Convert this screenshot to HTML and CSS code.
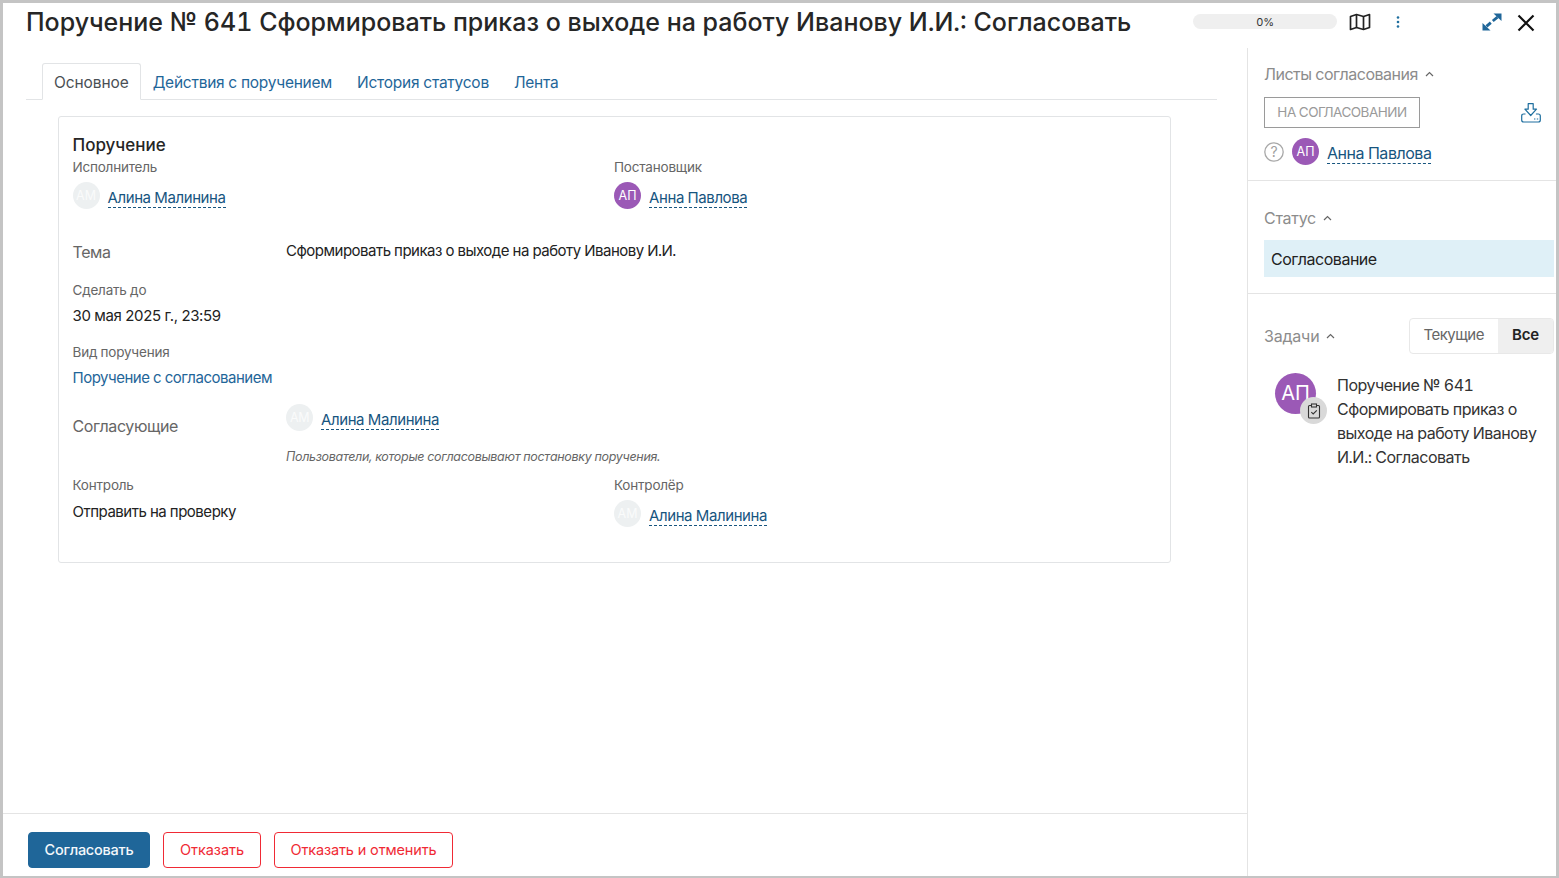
FILE: index.html
```html
<!DOCTYPE html>
<html lang="ru">
<head>
<meta charset="utf-8">
<title>Поручение № 641</title>
<link rel="stylesheet" href="styles.css">
</head>
<body>
<div class="modal">
  <header class="head">
    <h1 class="title">Поручение № 641 Сформировать приказ о выходе на работу Иванову И.И.: Согласовать</h1>
    <div class="progress">0%</div>
    <svg class="ico-map" width="22" height="18" viewBox="0 0 22 18" fill="none" stroke="#222" stroke-width="1.7" stroke-linejoin="round"><path d="M1.5 3.5 7.5 1.5 14.5 3.5 20.5 1.5V14.5L14.5 16.5 7.5 14.5 1.5 16.5Z"/><path d="M7.5 1.5V14.5M14.5 3.5V16.5"/></svg>
    <svg class="ico-dots" width="4" height="12" viewBox="0 0 4 12" fill="#1f6f9f"><circle cx="2" cy="1.5" r="1.3"/><circle cx="2" cy="6" r="1.3"/><circle cx="2" cy="10.5" r="1.3"/></svg>
    <svg class="ico-expand" width="20" height="18" viewBox="0 0 20 18" fill="#1f6699"><path d="M11.5 .5H19.5V8Z"/><path d="M.5 17.5V10L8.5 17.5Z"/><path d="M4.5 13.4 8.8 9.6M10.8 8 15.5 4.2" stroke="#1f6699" stroke-width="2.8"/></svg>
    <svg class="ico-close" width="18" height="18" viewBox="0 0 18 18" fill="none" stroke="#111" stroke-width="2.2"><path d="M1.5 1.5 16.5 16.5M16.5 1.5 1.5 16.5"/></svg>
  </header>
  <div class="body">
    <main class="main">
      <div class="content">
        <nav class="tabs">
          <span class="tab active">Основное</span>
          <a class="tab">Действия с поручением</a>
          <a class="tab">История статусов</a>
          <a class="tab">Лента</a>
        </nav>
        <section class="card">
          <h2 class="card-title">Поручение</h2>
          <div class="cols first">
            <div class="col">
              <div class="label">Исполнитель</div>
              <div class="user"><span class="ava pale">АМ</span><a class="ulink">Алина Малинина</a></div>
            </div>
            <div class="col">
              <div class="label">Постановщик</div>
              <div class="user"><span class="ava">АП</span><a class="ulink">Анна Павлова</a></div>
            </div>
          </div>
          <div class="row topic">
            <div class="row-label">Тема</div>
            <div class="row-val">Сформировать приказ о выходе на работу Иванову И.И.</div>
          </div>
          <div class="field due">
            <div class="label">Сделать до</div>
            <div class="value">30 мая 2025 г., 23:59</div>
          </div>
          <div class="field kind">
            <div class="label">Вид поручения</div>
            <a class="value link">Поручение с согласованием</a>
          </div>
          <div class="row approvers">
            <div class="row-label">Согласующие</div>
            <div class="row-val">
              <div class="user"><span class="ava pale">АМ</span><a class="ulink">Алина Малинина</a></div>
              <div class="hint">Пользователи, которые согласовывают постановку поручения.</div>
            </div>
          </div>
          <div class="cols control">
            <div class="col">
              <div class="label">Контроль</div>
              <div class="value ctl">Отправить на проверку</div>
            </div>
            <div class="col">
              <div class="label">Контролёр</div>
              <div class="user"><span class="ava pale">АМ</span><a class="ulink">Алина Малинина</a></div>
            </div>
          </div>
        </section>
      </div>
      <footer class="foot">
        <button class="btn primary">Согласовать</button>
        <button class="btn danger refuse">Отказать</button>
        <button class="btn danger cancel">Отказать и отменить</button>
      </footer>
    </main>
    <aside class="side">
      <section class="sec sec-lists">
        <div class="sec-title">Листы согласования <svg class="chev" width="9" height="6" viewBox="0 0 9 6" fill="none" stroke="#666" stroke-width="1.2"><path d="M1 5 4.5 1.5 8 5"/></svg></div>
        <div class="status-row">
          <span class="tag">НА СОГЛАСОВАНИИ</span>
          <svg class="ico-dl" width="20" height="20" viewBox="0 0 20 20" fill="none" stroke="#1f6f9f" stroke-width="1.2" stroke-linejoin="round"><path d="M7.2 .7H12.2V6.2H15.5L9.7 12.5 3.9 6.2H7.2Z"/><path d="M4.5 11H2.7Q.7 11 .7 13V17Q.7 19 2.7 19H17.3Q19.3 19 19.3 17V13Q19.3 11 17.3 11H14.9"/><path d="M13 16H14.4M15.8 16H17.2"/></svg>
        </div>
        <div class="approver">
          <svg class="ico-q" width="20" height="20" viewBox="0 0 20 20" fill="none"><circle cx="10" cy="10" r="9.2" stroke="#a8a8a8" stroke-width="1.3"/><text class="q" x="10" y="15" text-anchor="middle">?</text></svg>
          <span class="ava">АП</span><a class="ulink side-link">Анна Павлова</a>
        </div>
      </section>
      <section class="sec sec-status">
        <div class="sec-title">Статус <svg class="chev" width="9" height="6" viewBox="0 0 9 6" fill="none" stroke="#666" stroke-width="1.2"><path d="M1 5 4.5 1.5 8 5"/></svg></div>
        <div class="status-bar">Согласование</div>
      </section>
      <section class="sec-tasks">
        <div class="tasks-head">
          <div class="sec-title">Задачи <svg class="chev" width="9" height="6" viewBox="0 0 9 6" fill="none" stroke="#666" stroke-width="1.2"><path d="M1 5 4.5 1.5 8 5"/></svg></div>
          <div class="seg"><span class="seg-item">Текущие</span><span class="seg-item on">Все</span></div>
        </div>
        <div class="task">
          <div class="task-ava">
            <span class="ava big">АП</span>
            <span class="badge"><svg width="14" height="16" viewBox="0 0 14 16" fill="none" stroke="#333" stroke-width="1.1"><rect x="1.5" y="2.5" width="11" height="12.5" rx="1"/><rect x="4.5" y="1" width="5" height="3" fill="#d9d9d9"/><path d="M4.3 9.2 6.2 11 9.8 7.4"/></svg></span>
          </div>
          <div class="task-text">Поручение № 641 Сформировать приказ о выходе на работу Иванову И.И.: Согласовать</div>
        </div>
      </section>
    </aside>
  </div>
</div>
</body>
</html>
```

FILE: styles.css
```css
* { box-sizing: border-box; }
html, body { margin: 0; height: 100%; }
body { font-family: Inter, "Noto Sans", sans-serif; color: #222; background: #fff; overflow: hidden; font-variant-numeric: tabular-nums; }
a { color: inherit; }

.modal { width: 1559px; height: 878px; border: 3px solid #c4c4c4; border-bottom-width: 2px; display: flex; flex-direction: column; background: #fff; }

.head { height: 45px; flex: none; display: flex; align-items: flex-start; padding: 0 0 0 23px; }
.title { margin: 4px 0 0; font-size: 25px; line-height: 30px; font-weight: 500; color: #262626; letter-spacing: 0; white-space: nowrap; width: 1167px; }
.progress { width: 144px; height: 15px; margin-top: 11px; border-radius: 8px; background: #efefef; font-size: 11px; line-height: 16px; text-align: center; color: #333; letter-spacing: -0.2px; }
.ico-map { margin: 10px 0 0 12px; }
.ico-dots { margin: 13px 0 0 25px; }
.ico-expand { margin: 10px 0 0 82px; }
.ico-close { margin: 11px 0 0 14.5px; }

.body { flex: 1; display: flex; min-height: 0; }
.main { width: 1245px; flex: none; display: flex; flex-direction: column; border-right: 1px solid #e4e4e4; }
.content { flex: 1; padding: 15px 30px 0 23px; }

.tabs { display: flex; height: 37px; border-bottom: 1px solid #e2e4e6; padding-left: 16px; font-size: 15.5px; line-height: 37px; }
.tab { color: #1f6699; padding: 1px 13px 0 12px; height: 37px; letter-spacing: -0.24px; }
.tab.active { color: #4a4f54; background: #fff; border: 1px solid #e2e4e6; border-bottom-color: #fff; border-radius: 3px 3px 0 0; padding: 0 11px; line-height: 37px; letter-spacing: -0.1px; }

.card { margin: 16px 0 0 32px; width: 1113px; height: 447px; border: 1px solid #e2e4e6; border-radius: 3px; padding: 17px 13px 0 13.5px; }
.card-title { margin: 0 0 2px; font-size: 17px; line-height: 22px; font-weight: 500; color: #262626; }
.cols { display: grid; grid-template-columns: 541.5px 1fr; }
.label { font-size: 13.5px; line-height: 18px; color: #666; letter-spacing: -0.2px; }
.user { display: flex; align-items: center; }
.ava { width: 27px; height: 27px; flex: none; border-radius: 50%; background: #9b59b6; color: #fff; font-size: 12.5px; line-height: 27px; text-align: center; }
.ava.pale { background: #edf0f1; color: #fafbfb; }
.ulink { margin-left: 8px; font-size: 15px; line-height: 19px; color: #17557f; border-bottom: 1px dashed #17557f; letter-spacing: -0.4px; position: relative; top: 2px; }
.side-link { font-size: 16px; letter-spacing: -0.46px; }
.cols.first .user { margin-top: 6px; }
.value { font-size: 15px; line-height: 20px; color: #222; letter-spacing: -0.48px; display: block; }
.link { color: #1f6699; }
.row { display: flex; }
.row-label { width: 213.5px; flex: none; font-size: 16px; color: #666; letter-spacing: -0.4px; }
.row-val { font-size: 15px; color: #222; letter-spacing: -0.5px; }
.topic { margin-top: 32px; height: 30px; }
.topic .row-label { line-height: 22px; }
.topic .row-val { line-height: 20px; }
.field.due { margin-top: 10px; }
.field .label { line-height: 18px; }
.field .value { margin-top: 7px; }
.field.due .value { font-variant-numeric: normal; letter-spacing: -0.38px; }
.field.kind { margin-top: 17px; }
.field.kind .value { margin-top: 7px; }
.approvers { margin-top: 16px; height: 72px; }
.approvers .row-label { line-height: 24px; padding-top: 10px; }
.hint { margin-top: 18px; font-size: 12.5px; line-height: 16px; font-style: italic; color: #666; letter-spacing: -0.31px; }
.control { margin-top: 0; }
.ctl { margin-top: 8px; }
.control .user { margin-top: 6px; }

.foot { height: 63px; flex: none; border-top: 1px solid #e4e4e4; display: flex; gap: 13px; padding: 18px 0 0 25px; }
.btn { height: 36px; font-family: inherit; font-size: 14.5px; border-radius: 4px; background: #fff; padding: 0 0 2px; letter-spacing: -0.15px; cursor: pointer; }
.primary { background: #1f6699; border: 1px solid #1f6699; color: #f4f8fb; font-weight: 500; width: 122px; letter-spacing: -0.25px; }
.danger { border: 1px solid #f02a35; color: #f02a35; }
.refuse { width: 98px; letter-spacing: -0.05px; }
.cancel { width: 179px; }

.side { flex: 1; min-width: 0; }
.sec { border-bottom: 1px solid #e4e4e4; padding-left: 16px; }
.sec-lists { height: 133px; padding-top: 15px; }
.sec-title { font-size: 16px; line-height: 22px; color: #8c8c8c; letter-spacing: -0.5px; display: flex; align-items: center; gap: 7px; }
.chev { flex: none; }
.status-row { display: flex; justify-content: space-between; align-items: center; margin-top: 12px; padding-right: 15px; }
.tag { width: 156px; height: 31px; border: 1px solid #9a9a9a; font-size: 13.5px; line-height: 29px; color: #9a9a9a; text-align: center; letter-spacing: -0.5px; }
.approver { display: flex; align-items: center; margin-top: 10px; }
.ico-q { margin-right: 8px; }
.q { font-family: Inter, sans-serif; font-size: 14px; fill: #a0a0a0; }
.sec-status { height: 113px; padding-top: 26px; }
.sec-status .sec-title { letter-spacing: -0.3px; }
.status-bar { margin-top: 11px; height: 37px; width: 290px; padding-left: 7px; background: #dff0f7; font-size: 16px; line-height: 38px; color: #222; letter-spacing: -0.48px; }
.sec-tasks { padding: 24px 0 0 16px; }
.tasks-head { display: flex; justify-content: space-between; align-items: center; padding-right: 2px; }
.tasks-head .sec-title { margin-top: 0; letter-spacing: -0.2px; }
.seg { display: flex; height: 36px; border: 1px solid #e8e8e8; border-radius: 4px; overflow: hidden; font-size: 15px; line-height: 32px; letter-spacing: -0.5px; }
.seg-item { padding: 0 14px; color: #666; }
.seg-item:first-child { padding-left: 13.5px; }
.seg-item.on { background: #efefef; color: #222; font-weight: 600; letter-spacing: -0.15px; }
.task { display: flex; margin: 19px 0 0 11px; }
.task-ava { position: relative; width: 62px; height: 40px; flex: none; }
.ava.big { display: block; width: 41px; height: 41px; font-size: 20px; line-height: 41px; }
.badge { position: absolute; left: 25px; top: 24px; width: 27px; height: 27px; border-radius: 50%; background: #d9d9d9; display: flex; align-items: center; justify-content: center; }
.task-text { width: 205px; font-size: 16px; line-height: 24px; color: #333; letter-spacing: -0.5px; }
```
